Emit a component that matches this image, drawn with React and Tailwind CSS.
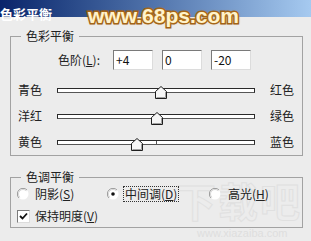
import React from 'react';

const cjk = { fontFamily: '"Noto Sans CJK SC", "Liberation Sans", sans-serif' };

function Thumb({ left }) {
    return (
        <svg
            className="absolute top-[-3px]"
            style={{ left: left - 6 }}
            width="12"
            height="13"
            viewBox="0 0 12 13"
        >
            <polygon points="0.5,5.5 6,0.5 11.5,5.5 11.5,12.5 0.5,12.5" fill="#f6f6f6" stroke="#1e1e1e" />
            <polyline points="1.5,11.5 10.5,11.5 10.5,6" fill="none" stroke="#a0a0a0" />
        </svg>
    );
}

function SliderRow({ left, right, value, tick }) {
    return (
        <div className="flex items-center h-[26px] pl-[7px]">
            <span className="w-[39px] text-[12px] leading-[12px] text-[#222]">{left}</span>
            <div className="relative w-[198px] h-[5px] bg-white border border-[#2a2a2a] border-b-[#555]">
                {tick && <div className="absolute left-[98px] top-0 w-px h-[3px] bg-[#555]" />}
                <Thumb left={99 + value} />
            </div>
            <span className="ml-[15px] text-[12px] leading-[12px] text-[#222]">{right}</span>
        </div>
    );
}

function Radio({ checked }) {
    return (
        <svg width="12" height="12" viewBox="0 0 12 12" className="shrink-0">
            <circle cx="6" cy="6" r="5.5" fill="#ffffff" />
            <path d="M 10 2 A 5.5 5.5 0 0 0 2 10" fill="none" stroke="#9a9a9a" />
            <path d="M 9.2 2.8 A 4.5 4.5 0 0 0 2.8 9.2" fill="none" stroke="#d6d6d6" />
            {checked && <circle cx="6" cy="6" r="1.8" fill="#111" />}
        </svg>
    );
}

function Field({ value }) {
    return (
        <div className="w-[40px] h-[20px] bg-white border border-[#7a7a7a] border-r-[#dcdcdc] border-b-[#dcdcdc] flex items-center pl-[2px] text-[12px] leading-[12px] text-[#111]">
            {value}
        </div>
    );
}

export default function App() {
    return (
        <div className="relative w-[311px] h-[241px] overflow-hidden bg-[#ececec]" style={cjk}>
            <div className="h-[17px] bg-gradient-to-r from-[#0a246a] to-[#a6caf0]">
                <span className="text-white font-bold text-[13px] leading-[17px]">色彩平衡</span>
            </div>

            {/* faint site watermark behind the lower group */}
            <div className="absolute left-[176px] top-[180px] text-[40px] leading-none font-bold text-transparent [-webkit-text-stroke:1px_#e0e0e0] tracking-[2px]">
                下载吧
            </div>
            <div
                className="absolute left-[197px] top-[228px] text-[11px] leading-none text-[#dedede]"
                style={{ fontFamily: '"Liberation Sans", sans-serif' }}
            >
                www.xiazaiba.com
            </div>

            <div className="relative px-[10px] pt-[13px]">
                <fieldset className="w-[293px] border border-[#a2a2a2] pt-[8px]">
                    <legend className="ml-[10px] px-[5px] text-[12px] leading-[12px] text-[#222]">色彩平衡</legend>
                    <div className="flex items-center h-[20px]">
                        <span className="ml-[47px] w-[55px] text-[12px] leading-[12px] text-[#222]">
                            色阶(<span className="underline">L</span>):
                        </span>
                        <div className="flex gap-[9px]">
                            <Field value="+4" />
                            <Field value="0" />
                            <Field value="-20" />
                        </div>
                    </div>
                    <div className="mt-[7px]">
                        <SliderRow left="青色" right="红色" value={4} />
                        <SliderRow left="洋红" right="绿色" value={0} />
                        <SliderRow left="黄色" right="蓝色" value={-20} tick />
                    </div>
                </fieldset>

                <fieldset className="mt-[15px] w-[293px] border border-[#a2a2a2] pt-[3px] pb-[3px]">
                    <legend className="ml-[10px] px-[5px] text-[12px] leading-[12px] text-[#222]">色调平衡</legend>
                    <div className="flex items-center h-[16px] pl-[6px] text-[12px] leading-[12px] text-[#222]">
                        <div className="w-[90px] flex items-center gap-[6px]">
                            <Radio />
                            <span>阴影(<span className="underline">S</span>)</span>
                        </div>
                        <div className="w-[102px] flex items-center gap-[4px]">
                            <Radio checked />
                            <span className="border border-dotted border-[#333] px-[1px] py-[1px]">
                                中间调(<span className="underline">D</span>)
                            </span>
                        </div>
                        <div className="flex items-center gap-[7px]">
                            <Radio />
                            <span>高光(<span className="underline">H</span>)</span>
                        </div>
                    </div>
                    <div className="mt-[6px] flex items-center h-[16px] pl-[6px] gap-[5px] text-[12px] leading-[12px] text-[#222]">
                        <div className="w-[13px] h-[13px] bg-white border border-[#7a7a7a] border-r-[#dcdcdc] border-b-[#dcdcdc] flex items-center justify-center">
                            <svg width="9" height="9" viewBox="0 0 9 9">
                                <polyline points="1,4 3.5,6.5 8,1.5" fill="none" stroke="#111" strokeWidth="1.8" />
                            </svg>
                        </div>
                        <span>保持明度(<span className="underline">V</span>)</span>
                    </div>
                </fieldset>
            </div>

            <div
                className="absolute left-[88px] top-[5px] text-[21px] leading-none font-bold text-[#fff3cc] [-webkit-text-stroke:3px_#9a5a10] [paint-order:stroke_fill] [text-shadow:0_0_3px_#c88a30]"
                style={{ fontFamily: '"Liberation Sans", sans-serif' }}
            >
                www.68ps.com
            </div>
        </div>
    );
}
